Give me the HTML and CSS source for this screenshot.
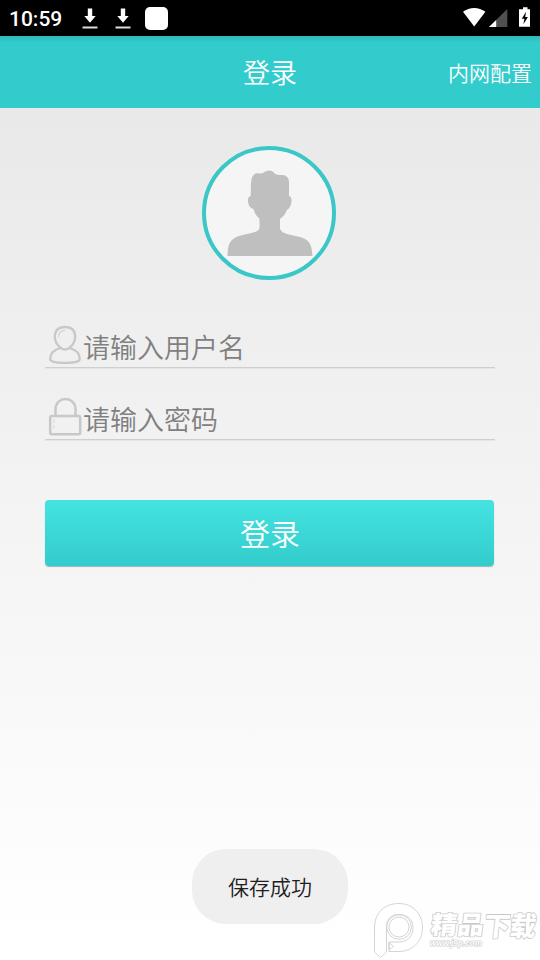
FILE: index.html
```html
<!DOCTYPE html>
<html lang="zh-CN">
<head>
<meta charset="utf-8">
<title>登录</title>
<link rel="stylesheet" href="styles.css">
</head>
<body>
<div class="screen">
  <div class="statusbar">
    <span class="clock">10:59</span>
    <svg class="download" width="16" height="22" viewBox="0 0 16 22"><path d="M5.8 1.500h4.400v7.500h3.500L8 15.700 2.300 9h3.500z" fill="#fff"/><path d="M.5 19.500h15v2H.5z" fill="#ddd"/></svg>
    <svg class="download" width="16" height="22" viewBox="0 0 16 22"><path d="M5.8 1.500h4.400v7.500h3.500L8 15.700 2.300 9h3.500z" fill="#fff"/><path d="M.5 19.500h15v2H.5z" fill="#ddd"/></svg>
    <span class="app-square"></span>
    <svg class="system" width="70" height="24" viewBox="0 0 70 24">
      <path d="M0 5.800C6.500.7 15.800.7 22.400 5.800L11.200 20.500z" fill="#fff"/>
      <path d="M44.300 3v18H26z" fill="#505050"/><path d="M33.200 13.900V21H26z" fill="#fff"/>
      <path d="M60 1.300h4.500v2H67v17.400H56V3.300h4z" fill="#fff"/>
      <path d="M63 5.800l-4.200 7h2.600l-1 5.500 4.500-7.300h-2.700z" fill="#000"/>
    </svg>
  </div>
  <header class="header">
    <span></span>
    <h1 class="title">登录</h1>
    <a class="config">内网配置</a>
  </header>
  <main class="content">
    <div class="avatar">
      <svg width="126" height="126" viewBox="206 150 126 126"><path fill="#bfbfbf" d="M227.500 256C227.500 244 230 239 239 236C247 233.500 256 233 259 229.500C260 227 259.500 222 259.300 218.500Q255.500 216 253.500 209Q249 208 248 202Q247.500 197 250.700 196L251 183Q251.500 173 258 173.300Q263 174 265 171.700C269 170 272 170 274.500 173.500Q277 175.500 283 175Q289 175.500 289 183V196Q292 197 291.500 202Q290.500 208 287 210Q284.500 216 280 219L280 229Q282 233 289 234.500C301 237 306 238 309.500 243Q312 247 312.500 256Z"/></svg>
    </div>
    <form class="form">
      <label class="field">
        <svg class="field-icon" width="34" height="40" viewBox="0 0 34 40" fill="none"><path stroke="#c8c8c8" stroke-width="2.300" stroke-linejoin="round" d="M12.800 24C4.500 17.500 4 3 17 3S29.500 17.500 21.200 24C18.500 26 15.500 26 12.800 24C6.500 25.500 2.200 29.500 2.200 35.500C4 40 30 40 31.800 35.500C31.800 29.500 27.500 25.500 21.200 24"/><path stroke="#d4d4d4" stroke-width="1.300" d="M10.500 13.500C10.500 8.500 13 6.300 17 6.300"/></svg>
        <span>请输入用户名</span>
      </label>
      <label class="field">
        <svg class="field-icon" width="34" height="40" viewBox="0 0 34 40" fill="none"><rect x="2.200" y="20" width="30" height="18.200" rx="1.500" stroke="#c8c8c8" stroke-width="2.500"/><path stroke="#c8c8c8" stroke-width="2.500" d="M7.500 19V13.500C7.500 -.5 27.500 -.5 27.500 13.500V19"/><path stroke="#d4d4d4" stroke-width="1" stroke-dasharray="4 2" d="M6 23v10"/></svg>
        <span>请输入密码</span>
      </label>
      <button class="login" type="button">登录</button>
    </form>
  </main>
  <div class="toast">保存成功</div>
  <svg class="watermark" width="168" height="60" viewBox="372 900 168 60">
    <g fill="#fff" stroke="#c9c9c9" stroke-width=".8">
      <path d="M374.500 927C375 911 386 903.500 399 903.500C413 903.500 422.500 914 422.500 927.500C422.500 942 412 951.500 399 951.500H389V942.500L393.500 946.500 389 950V942H399C408 942 413 936 413 927.500C413 919 407 914.500 399 914.500C391 914.500 386.500 919 386.500 927V952L380.500 957.500 374.500 952Z"/>
      <circle cx="399" cy="927" r="12.300"/><circle cx="399" cy="927" r="10"/>
    </g>
    <g class="mark-text">
      <text transform="translate(430 934) skewX(-7)" font-size="25" textLength="53" lengthAdjust="spacingAndGlyphs">精品</text>
      <text transform="translate(483 936) skewX(-7)" font-size="27" textLength="52" lengthAdjust="spacingAndGlyphs">下载</text>
      <text class="mark-url" x="430" y="946" font-size="9" textLength="52" lengthAdjust="spacingAndGlyphs">www.j9p.com</text>
    </g>
  </svg>
</div>
</body>
</html>
```
FILE: styles.css
```css
* { box-sizing: border-box; }
body {
  margin: 0;
  font-family: Roboto, "Noto Sans CJK SC", sans-serif;
}
.screen {
  position: relative;
  width: 540px;
  height: 960px;
  overflow: hidden;
  background: linear-gradient(#e9e9e9 108px, #fff 940px);
}
.statusbar {
  display: flex;
  align-items: center;
  height: 36px;
  padding-left: 9px;
  background: #000;
  color: #fff;
}
.clock {
  width: 73px;
  font-size: 21px;
  font-weight: 500;
  line-height: 36px;
  padding-top: 1px;
}
.download { margin-right: 17px; }
.app-square {
  width: 23px;
  height: 23px;
  margin-left: -3px;
  border-radius: 5px;
  background: #fff;
}
.system { margin: 0 7px 0 auto; }
.header {
  display: grid;
  grid-template-columns: 1fr auto 1fr;
  align-items: center;
  height: 72px;
  padding: 0 8px;
  background: linear-gradient(#2fb9b9, #33cccc 7px);
  color: #fff;
}
.title {
  margin: 0;
  padding-top: 3px;
  font-size: 27px;
  font-weight: 350;
  line-height: 40px;
}
.config {
  justify-self: end;
  font-size: 21px;
  font-weight: 350;
}
.content { padding: 38px 45px 0; }
.avatar {
  width: 134px;
  height: 134px;
  margin: 0 auto;
  border: 4px solid #3bc7c7;
  border-radius: 50%;
  background: #f5f5f5;
  transform: translateX(-1px);
}
.avatar svg { display: block; }
.form { padding-top: 40px; }
.field {
  display: flex;
  align-items: center;
  height: 48px;
  margin-bottom: 24px;
  padding: 0 0 0 3px;
  border-bottom: 1px solid #cfcfcf;
  box-shadow: 0 1px #e5e5e5;
  color: #808080;
  font-size: 27px;
  font-weight: 350;
  line-height: 36px;
}
.field-icon { margin-right: 1px; }
.field span { padding-top: 11px; }
.login {
  display: block;
  width: 449px;
  height: 66px;
  margin-top: 60px;
  padding: 0 0 2px 1px;
  border: 0;
  border-radius: 4px;
  background: linear-gradient(#44e3e1, #33cccc);
  box-shadow: 0 1px 1px #a0b5b5;
  color: #fff;
  font: 350 30px Roboto, "Noto Sans CJK SC", sans-serif;
}
.toast {
  position: absolute;
  left: 192px;
  top: 849px;
  width: 156px;
  height: 75px;
  border-radius: 34px;
  background: #efefef;
  color: #202020;
  font-size: 21px;
  font-weight: 350;
  line-height: 78px;
  text-align: center;
}
.watermark {
  position: absolute;
  right: 0;
  bottom: 0;
}
.mark-text {
  fill: #fff;
  stroke: #c9c9c9;
  stroke-width: 1.6;
  stroke-linejoin: round;
  paint-order: stroke;
  font-family: "Noto Sans CJK SC", sans-serif;
  font-weight: 900;
}
.mark-url {
  font-family: "Liberation Sans", sans-serif;
  font-style: italic;
  font-weight: 700;
  stroke-width: 1.2;
}
```
